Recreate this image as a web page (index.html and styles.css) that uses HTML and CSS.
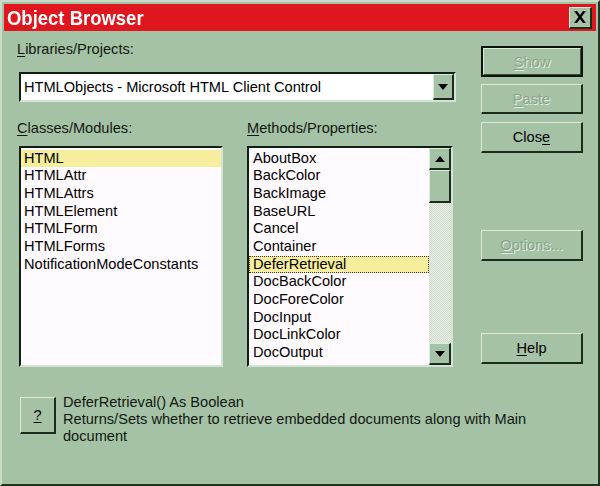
FILE: index.html
```html
<!DOCTYPE html>
<html>
<head>
<meta charset="utf-8">
<link rel="stylesheet" href="styles.css">
</head>
<body>
<div class="window">
  <div class="titlebar">
    <span class="title">Object Browser</span>
    <span class="xbtn"><svg width="14" height="12" viewBox="0 0 14 12"><path d="M1 0h3l3 4 3-4h3L8.5 6 13 12h-3L7 8l-3 4H1l4.5-6z" fill="#000"/></svg></span>
  </div>
  <div class="body">
    <div class="upper">
      <div class="main">
        <div class="label lib-label"><u>L</u>ibraries/Projects:</div>
        <div class="combo">
          <span class="combo-text">HTMLObjects - Microsoft HTML Client Control</span>
          <span class="combo-btn"><svg width="10" height="6" viewBox="0 0 10 6"><path d="M0 0h10L5 6z" fill="#000"/></svg></span>
        </div>
        <div class="lists">
          <div class="col col-left">
            <div class="label"><u>C</u>lasses/Modules:</div>
            <div class="listbox">
              <div class="item sel">HTML</div>
              <div class="item">HTMLAttr</div>
              <div class="item">HTMLAttrs</div>
              <div class="item">HTMLElement</div>
              <div class="item">HTMLForm</div>
              <div class="item">HTMLForms</div>
              <div class="item">NotificationModeConstants</div>
            </div>
          </div>
          <div class="col col-right">
            <div class="label"><u>M</u>ethods/Properties:</div>
            <div class="listbox scrolled">
              <div class="items">
                <div class="item">AboutBox</div>
                <div class="item">BackColor</div>
                <div class="item">BackImage</div>
                <div class="item">BaseURL</div>
                <div class="item">Cancel</div>
                <div class="item">Container</div>
                <div class="item sel focus">DeferRetrieval</div>
                <div class="item">DocBackColor</div>
                <div class="item">DocForeColor</div>
                <div class="item">DocInput</div>
                <div class="item">DocLinkColor</div>
                <div class="item">DocOutput</div>
              </div>
              <div class="scrollbar">
                <span class="sb-btn"><svg width="10" height="6" viewBox="0 0 10 6"><path d="M0 6h10L5 0z" fill="#000"/></svg></span>
                <span class="sb-thumb"></span>
                <span class="sb-track"></span>
                <span class="sb-btn"><svg width="10" height="6" viewBox="0 0 10 6"><path d="M0 0h10L5 6z" fill="#000"/></svg></span>
              </div>
            </div>
          </div>
        </div>
      </div>
      <div class="buttons">
        <span class="btn default disabled show"><span><u>S</u>how</span></span>
        <span class="btn disabled paste"><u>P</u>aste</span>
        <span class="btn close">Clos<u>e</u></span>
        <span class="btn disabled options"><u>O</u>ptions...</span>
        <span class="btn help"><u>H</u>elp</span>
      </div>
    </div>
    <div class="desc">
      <span class="btn qbtn"><u>?</u></span>
      <div class="desc-text">DeferRetrieval() As Boolean<br>Returns/Sets whether to retrieve embedded documents along with Main document</div>
    </div>
  </div>
</div>
</body>
</html>
```
FILE: styles.css
```css
* { box-sizing: border-box; }
html, body { margin: 0; padding: 0; }
body {
  width: 600px;
  height: 486px;
  overflow: hidden;
  font-family: "Liberation Sans", Arial, sans-serif;
  font-size: 14.6px;
  color: #000;
}
.window {
  width: 600px;
  height: 486px;
  background: #a6c2a6;
  border-top: 2px solid #c8dcc8;
  border-left: 2px solid #c8dcc8;
  border-right: 2px solid #203420;
  border-bottom: 2px solid #203420;
  padding: 2px;
  display: flex;
  flex-direction: column;
}
.titlebar {
  height: 27px;
  background: #e0161e;
  display: flex;
  align-items: center;
  justify-content: space-between;
  padding: 0 4px 0 3px;
  flex: none;
}
.title {
  display: inline-block;
  color: #fff;
  font-weight: bold;
  font-size: 21px;
  line-height: 27px;
  transform: scaleX(0.88);
  transform-origin: left center;
}
.xbtn {
  width: 23px;
  height: 22px;
  background: #a6c2a6;
  border-top: 1px solid #dceadc;
  border-left: 1px solid #dceadc;
  border-right: 2px solid #1c2c1c;
  border-bottom: 2px solid #1c2c1c;
  display: flex;
  align-items: center;
  justify-content: center;
}
.body {
  flex: 1;
  display: flex;
  flex-direction: column;
  padding-left: 13px;
}
.upper { display: flex; }
.main {
  width: 440px;
  display: flex;
  flex-direction: column;
}
.label {
  line-height: 18px;
  height: 18px;
  color: #101810;
}
.lib-label { margin-top: 9px; }
.combo {
  margin-top: 14px;
  margin-left: 2px;
  width: 437px;
  height: 30px;
  background: #fff;
  border-top: 2px solid #102010;
  border-left: 2px solid #102010;
  border-right: 2px solid #d4e4d4;
  border-bottom: 2px solid #d4e4d4;
  display: flex;
  align-items: center;
  justify-content: space-between;
}
.combo-text { padding-left: 3px; line-height: 18px; }
.combo-btn {
  width: 21px;
  height: 26px;
  background: #a6c2a6;
  border-top: 1px solid #dceadc;
  border-left: 1px solid #dceadc;
  border-right: 2px solid #1c2c1c;
  border-bottom: 2px solid #1c2c1c;
  display: flex;
  align-items: center;
  justify-content: center;
}
.lists {
  margin-top: 17px;
  display: flex;
  gap: 24px;
}
.col { display: flex; flex-direction: column; }
.col-left .listbox { width: 204px; margin-left: 2px; }
.col-right .listbox { width: 206px; }
.listbox {
  margin-top: 9px;
  height: 221px;
  background: #fffafd;
  border-top: 2px solid #102010;
  border-left: 2px solid #102010;
  border-right: 2px solid #d4e4d4;
  border-bottom: 2px solid #d4e4d4;
  padding-top: 1.5px;
}
.item {
  line-height: 17.7px;
  height: 17.7px;
  padding-left: 3px;
  white-space: nowrap;
}
.item.sel { background: #f6ee9c; }
.item.focus { outline: 1px dotted #333; outline-offset: -1px; }
.listbox.scrolled {
  display: flex;
  padding-top: 0;
}
.items { flex: 1; padding-top: 1.5px; }
.col-right .item { padding-left: 4px; }
.scrollbar {
  width: 22px;
  display: flex;
  flex-direction: column;
  background: #dde8dc;
}
.sb-btn, .sb-thumb {
  background: #a6c2a6;
  border-top: 1px solid #dceadc;
  border-left: 1px solid #dceadc;
  border-right: 2px solid #1c2c1c;
  border-bottom: 2px solid #1c2c1c;
  display: flex;
  align-items: center;
  justify-content: center;
}
.sb-btn { height: 22px; }
.sb-thumb { height: 33px; }
.sb-track {
  flex: 1;
  background: repeating-conic-gradient(#e8f0e6 0 25%, #cfdccd 0 50%) 0 0 / 2px 2px;
}
.desc {
  margin-top: 30px;
  display: flex;
  align-items: flex-start;
  gap: 7px;
}
.btn {
  display: flex;
  align-items: center;
  justify-content: center;
  background: #a6c2a6;
  border-top: 1px solid #dceadc;
  border-left: 1px solid #dceadc;
  border-right: 2px solid #1c2c1c;
  border-bottom: 2px solid #1c2c1c;
  color: #000;
}
.qbtn {
  width: 36px;
  height: 37px;
  margin-left: 3px;
  flex: none;
}
.desc-text {
  margin-top: -3px;
  line-height: 17px;
  width: 490px;
  color: #101810;
}
.buttons {
  margin-left: 24px;
  width: 102px;
  display: flex;
  flex-direction: column;
}
.buttons .btn { width: 102px; height: 31px; }
.buttons .show {
  margin-top: 15px;
  border: 2px solid #0c140c;
  padding: 0;
}
.buttons .show > span {
  flex: 1;
  align-self: stretch;
  display: flex;
  align-items: center;
  justify-content: center;
  border-top: 1px solid #dceadc;
  border-left: 1px solid #dceadc;
  border-right: 1px solid #3a503a;
  border-bottom: 1px solid #3a503a;
}
.buttons .paste { margin-top: 7px; height: 30px; }
.buttons .close { margin-top: 8px; }
.buttons .options { margin-top: 77px; }
.buttons .help { margin-top: 72px; }
.disabled {
  color: #8aa48a;
  text-shadow: 1px 1px 0 #e4eee4;
}
u { text-decoration: underline; text-underline-offset: 2px; }
```
